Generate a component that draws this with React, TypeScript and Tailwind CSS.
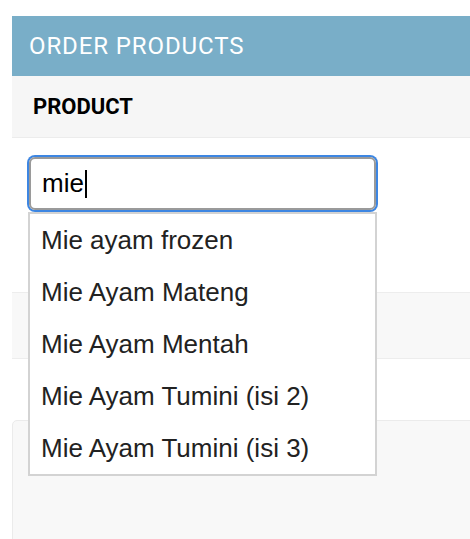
const RESULTS = [
  'Mie ayam frozen',
  'Mie Ayam Mateng',
  'Mie Ayam Mentah',
  'Mie Ayam Tumini (isi 2)',
  'Mie Ayam Tumini (isi 3)',
]

export default function App() {
  return (
    <div className="min-h-[539px] bg-white pt-4 pl-3 overflow-hidden">
      <div className="w-[470px]">
        <h2
          className="h-[60px] bg-[#79aec8] text-white flex items-center pl-[17px] text-[24px] tracking-[0.9px] uppercase"
          style={{ fontFamily: 'Roboto, sans-serif' }}
        >
          Order products
        </h2>

        <div
          className="h-[62px] bg-[#f6f6f6] border-b border-[#ececec] flex items-center pl-[21px] text-[22px] font-bold text-black"
          style={{ fontFamily: 'Roboto, sans-serif' }}
        >
          PRODUCT
        </div>

        <div className="relative h-[154px] pt-[19px] pl-[17px]">
          <div
            className="w-[347px] h-[53px] border-2 border-[#9a9a9a] rounded-[6px] shadow-[0_0_0_2px_#3d86e2] flex items-center pl-[11px] text-[26px] text-black"
            style={{ fontFamily: '"Liberation Sans", Arial, sans-serif' }}
          >
            mie
            <span className="w-[2px] h-[28px] bg-black ml-[1px]" />
          </div>

          <ul
            className="absolute z-10 left-[16px] top-[74px] w-[349px] bg-white border-2 border-[#d3d3d3] text-[26px] text-[#222]"
            style={{ fontFamily: '"Liberation Sans", Arial, sans-serif' }}
          >
            {RESULTS.map(r => (
              <li key={r} className="h-[52px] flex items-center pl-[11px]">
                {r}
              </li>
            ))}
          </ul>
        </div>

        <div className="h-[67px] bg-[#f8f8f8] border-y border-[#ededed]" />

        <div className="h-[61px]" />

        <div className="h-[130px] bg-[#f8f8f8] border border-[#ebebeb] rounded-tl-[5px]" />
      </div>
    </div>
  )
}
